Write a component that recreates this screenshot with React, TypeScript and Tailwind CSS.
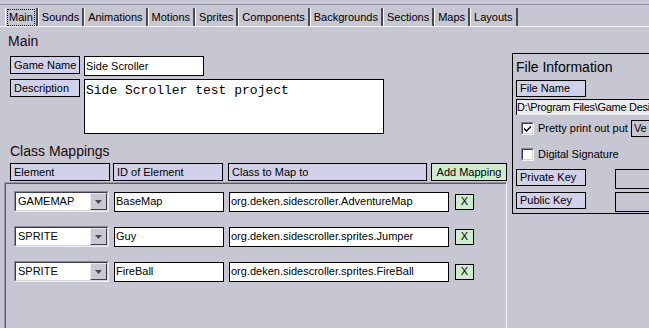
const tabs = [
  "Main",
  "Sounds",
  "Animations",
  "Motions",
  "Sprites",
  "Components",
  "Backgrounds",
  "Sections",
  "Maps",
  "Layouts",
];

const mappings = [
  { element: "GAMEMAP", id: "BaseMap", cls: "org.deken.sidescroller.AdventureMap" },
  { element: "SPRITE", id: "Guy", cls: "org.deken.sidescroller.sprites.Jumper" },
  { element: "SPRITE", id: "FireBall", cls: "org.deken.sidescroller.sprites.FireBall" },
];

function Label({ text, className }: { text: string; className: string }) {
  return (
    <div
      className={`flex shrink-0 items-center border border-black bg-[#d1d1ea] pl-[3px] leading-none ${className}`}
    >
      {text}
    </div>
  );
}

function Field({ value, className }: { value: string; className: string }) {
  return (
    <div
      className={`flex shrink-0 items-center overflow-hidden whitespace-nowrap border border-black bg-white pl-px leading-none ${className}`}
    >
      {value}
    </div>
  );
}

function Select({ value }: { value: string }) {
  return (
    <div className="h-[21px] w-[95px] shrink-0 border border-t-[#8a8a9a] border-l-[#8a8a9a] border-r-[#eeeef4] border-b-[#eeeef4]">
      <div className="flex h-full w-full items-center border border-t-[#3c3c48] border-l-[#3c3c48] border-r-[#d6d6de] border-b-[#d6d6de] bg-white">
        <span className="flex-1 pl-[2px] leading-none">{value}</span>
        <div className="flex h-[17px] w-[17px] items-center justify-center border border-t-[#e8e8ee] border-l-[#e8e8ee] border-r-[#404048] border-b-[#404048] bg-[#c9c9d2]">
          <svg width="7" height="4" viewBox="0 0 7 4">
            <path d="M0 0h7L3.5 4z" fill="#4a4a52" />
          </svg>
        </div>
      </div>
    </div>
  );
}

function Checkbox({ checked }: { checked?: boolean }) {
  return (
    <div className="h-[13px] w-[13px] shrink-0 border border-t-[#808090] border-l-[#808090] border-r-[#f4f4f8] border-b-[#f4f4f8]">
      <div className="flex h-full w-full items-center justify-center border border-t-[#404048] border-l-[#404048] border-r-[#d6d6de] border-b-[#d6d6de] bg-white">
        {checked && (
          <svg width="7" height="7" viewBox="0 0 7 7">
            <path d="M0 2.5l2.5 2.5L7 0.5v2L2.5 7 0 4.5z" fill="#000" />
          </svg>
        )}
      </div>
    </div>
  );
}

export default function App() {
  return (
    <div className="h-[328px] w-[649px] overflow-hidden bg-[#c6c7d3] font-['Liberation_Sans',Arial,sans-serif] text-[11px] text-black">
      <div className="mt-[4px] flex h-[23px] items-end border-t border-b border-t-[#8c8ca4] border-b-[#f2f2f6] pl-[5px]">
        {tabs.map((t, i) => (
          <div
            key={t}
            className={`flex h-[18px] items-center border-l border-r-2 border-l-white border-r-[#4a4a58] leading-none ${
              i === 0 ? "pl-px pr-px" : "pl-[3px] pr-[3px]"
            }`}
          >
            <span className={i === 0 ? "border border-dotted border-black px-px py-[2px]" : "py-[3px]"}>
              {t}
            </span>
          </div>
        ))}
      </div>

      <div className="flex">
        <div className="flex w-[507px] shrink-0 flex-col">
          <div className="ml-[8px] mt-[6px] text-[14px] leading-[16px] text-[#1c0808]">Main</div>

          <div className="ml-[10px] mt-[7px] flex gap-[4px]">
            <Label text="Game Name" className="h-[18px] w-[70px]" />
            <Field value="Side Scroller" className="h-[20px] w-[120px]" />
          </div>

          <div className="ml-[10px] mt-[3px] flex items-start gap-[4px]">
            <Label text="Description" className="h-[18px] w-[70px]" />
            <div className="h-[55px] w-[300px] border border-black bg-white pl-[1px] pt-[4px] font-['Liberation_Mono',monospace] text-[13px] leading-[14px]">
              Side Scroller test project
            </div>
          </div>

          <div className="ml-[10px] mt-[9px] text-[14px] leading-[16px] text-[#1c0808]">
            Class Mappings
          </div>

          <div className="ml-[10px] mt-[4px] flex gap-[3px]">
            <Label text="Element" className="h-[18px] w-[100px]" />
            <Label text="ID of Element" className="h-[18px] w-[110px]" />
            <Label text="Class to Map to" className="ml-[2px] h-[18px] w-[199px]" />
            <button className="ml-[1px] flex h-[18px] w-[80px] items-center justify-center border border-black bg-[#cfeccf] leading-none">
              Add Mapping
            </button>
          </div>

          <div className="ml-[4px] mt-px h-[200px] border-t border-l border-r border-t-[#9a9aac] border-l-[#9a9aac] border-r-[#f4f4f8]">
            <div className="flex h-full flex-col gap-[14px] border-t border-l border-t-[#5a5a6c] border-l-[#5a5a6c] pl-[8px] pt-[7px]">
              {mappings.map((m, i) => (
                <div key={i} className="flex items-center">
                  <Select value={m.element} />
                  <Field value={m.id} className="ml-[5px] h-[20px] w-[110px]" />
                  <Field value={m.cls} className="ml-[5px] h-[20px] w-[220px]" />
                  <button className="ml-[6px] flex h-[16px] w-[19px] items-center justify-center border border-black bg-[#cfeccf] leading-none">
                    X
                  </button>
                </div>
              ))}
            </div>
          </div>
        </div>

        <div className="ml-[5px] mt-[26px] flex h-[161px] w-[160px] shrink-0 flex-col border border-black pl-[3px]">
          <div className="mt-[5px] text-[14px] leading-[16px]">File Information</div>
          <Label text="File Name" className="mt-[5px] h-[17px] w-[70px]" />
          <div className="mt-[2px] flex h-[16px] items-center whitespace-nowrap border-t border-l border-black bg-[#ececef] leading-none tracking-[-0.3px]">
            D:\Program Files\Game Designer
          </div>
          <div className="mt-[5px] flex h-[17px] items-center pl-[5px]">
            <Checkbox checked />
            <span className="ml-[4px] leading-none">Pretty print out put</span>
            <div className="ml-[3px] flex h-[17px] flex-1 items-center border border-black pl-[2px] leading-none">
              Ve
            </div>
          </div>
          <div className="mt-[11px] flex h-[13px] items-center pl-[5px]">
            <Checkbox />
            <span className="ml-[4px] leading-none">Digital Signature</span>
          </div>
          <div className="mt-[8px] flex items-start">
            <Label text="Private Key" className="h-[17px] w-[70px]" />
            <div className="ml-[29px] h-[20px] flex-1 border border-black" />
          </div>
          <div className="mt-[3px] flex items-start">
            <Label text="Public Key" className="h-[17px] w-[70px]" />
            <div className="ml-[29px] h-[20px] flex-1 border border-black" />
          </div>
        </div>
      </div>
    </div>
  );
}
